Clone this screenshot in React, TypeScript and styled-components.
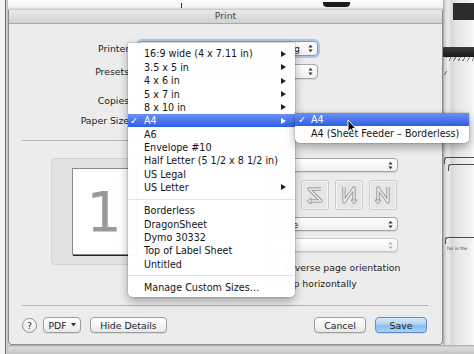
import styled, { createGlobalStyle } from 'styled-components';

type MenuEntry = { label: string; sub?: boolean; checked?: boolean; active?: boolean };

const sizeGroups: MenuEntry[][] = [
  [
    { label: '16:9 wide (4 x 7.11 in)', sub: true },
    { label: '3.5 x 5 in', sub: true },
    { label: '4 x 6 in', sub: true },
    { label: '5 x 7 in', sub: true },
    { label: '8 x 10 in', sub: true },
    { label: 'A4', sub: true, checked: true, active: true },
    { label: 'A6' },
    { label: 'Envelope #10' },
    { label: 'Half Letter (5 1/2 x 8 1/2 in)' },
    { label: 'US Legal' },
    { label: 'US Letter', sub: true },
  ],
  [
    { label: 'Borderless' },
    { label: 'DragonSheet' },
    { label: 'Dymo 30332' },
    { label: 'Top of Label Sheet' },
    { label: 'Untitled' },
  ],
  [{ label: 'Manage Custom Sizes…' }],
];

const a4Entries: MenuEntry[] = [
  { label: 'A4', checked: true, active: true },
  { label: 'A4 (Sheet Feeder – Borderless)' },
];

const GlobalStyle = createGlobalStyle`
  html, body {
    margin: 0;
    padding: 0;
  }
  body {
    width: 474px;
    height: 354px;
    overflow: hidden;
    background: #f0f0f0;
    font-family: "DejaVu Sans", "Lucida Grande", sans-serif;
    font-size: 9.3px;
    color: #1c1c1c;
  }
`;

const Desktop = styled.div`
  position: relative;
  width: 474px;
  height: 354px;
  display: flex;
  overflow: hidden;
`;

const LeftStrip = styled.div`
  width: 8px;
  flex-shrink: 0;
  background: linear-gradient(to right, #f4f4f4 0, #f4f4f4 5px, #6e6e6e 5px, #6e6e6e 6px, #d2d2d2 6px, #bdbdbd 8px);
`;

const CenterColumn = styled.div`
  width: 435px;
  flex-shrink: 0;
  display: flex;
  flex-direction: column;
`;

const TopStrip = styled.div`
  height: 10px;
  display: flex;
  align-items: flex-start;
  background: linear-gradient(#fbfbfb, #f3f3f3 70%, #c4c4c4);
`;

const Tick = styled.div`
  width: 1px;
  height: 5px;
  margin: 3px 0 0 173px;
  background: #333;
`;

const Pill = styled.div`
  width: 27px;
  height: 5px;
  margin: 2px 0 0 141px;
  border-radius: 0 0 4px 4px;
  background: #1a1a1a;
`;

const Dialog = styled.div`
  height: 335px;
  box-sizing: border-box;
  display: flex;
  flex-direction: column;
  background: #ececec;
  border: 1px solid #8c8c8c;
  border-top: none;
  border-radius: 0 0 4px 4px;
`;

const TitleBar = styled.div`
  height: 13px;
  line-height: 12px;
  text-align: center;
  font-size: 9.3px;
  color: #454545;
  background: linear-gradient(#e9e9e9, #d2d2d2);
  border-bottom: 1px solid #a8a8a8;
`;

const FormSection = styled.div`
  margin-top: 17px;
  display: flex;
  flex-direction: column;
`;

const FormRow = styled.div<{ $top: number }>`
  margin-top: ${p => p.$top}px;
  height: 15px;
  display: grid;
  grid-template-columns: 120px 180px;
  column-gap: 9px;
  align-items: center;
`;

const Label = styled.span`
  text-align: right;
  white-space: nowrap;
  color: #1c1c1c;
`;

const Popup = styled.div<{ $focus?: boolean; $disabled?: boolean }>`
  height: 15px;
  box-sizing: border-box;
  display: flex;
  align-items: center;
  padding: 0 4px 0 6px;
  border: 1px solid ${p => (p.$focus ? '#6d9ad6' : p.$disabled ? '#c6c6c6' : '#a4a4a4')};
  border-radius: 4px;
  background: linear-gradient(#ffffff, #f1f1f1);
  color: ${p => (p.$disabled ? '#a8a8a8' : '#1c1c1c')};
  box-shadow: ${p => (p.$focus ? '0 0 0 2px rgba(120, 165, 230, 0.55)' : '0 1px 1px rgba(0, 0, 0, 0.1)')};
  overflow: hidden;
`;

const PopupText = styled.span<{ $end?: boolean }>`
  flex: 1;
  white-space: nowrap;
  overflow: hidden;
  text-align: ${p => (p.$end ? 'right' : 'left')};
  margin-right: ${p => (p.$end ? 8 : 0)}px;
`;

const ArrowsIcon = styled.svg`
  flex-shrink: 0;
  margin-left: auto;
`;

const TextField = styled.div`
  width: 28px;
  height: 15px;
  box-sizing: border-box;
  background: #fff;
  border: 1px solid #a4a4a4;
`;

const Divider = styled.div<{ $top: number }>`
  margin: ${p => p.$top}px 14px 0 13px;
  height: 1px;
  background: #b4b4b4;
`;

const Details = styled.div`
  margin-top: 17px;
  display: flex;
  align-items: flex-start;
`;

const Preview = styled.div`
  margin-left: 42px;
  width: 106px;
  height: 107px;
  box-sizing: border-box;
  display: flex;
  align-items: center;
  justify-content: center;
  background: #e2e2e2;
  border: 1px solid #d2d2d2;
  border-radius: 4px;
`;

const Page = styled.div`
  width: 64px;
  height: 87px;
  box-sizing: border-box;
  display: flex;
  align-items: center;
  justify-content: center;
  background: #fff;
  border: 1px solid #8a8a8a;
  box-shadow: 1px 1px 0 #222;
  font-size: 56px;
  line-height: 1;
  color: #9a9a9a;
`;

const Options = styled.div`
  margin-left: 110px;
  width: 131px;
  display: flex;
  flex-direction: column;
`;

const OptionRow = styled.div<{ $top: number; $height: number }>`
  margin-top: ${p => p.$top}px;
  height: ${p => p.$height}px;
  display: flex;
  align-items: center;

  & > ${Popup} {
    flex: 1;
    height: ${p => p.$height}px;
  }
`;

const DirectionGroup = styled.div`
  display: flex;
  gap: 6px;
`;

const DirectionBox = styled.div`
  width: 28px;
  height: 30px;
  box-sizing: border-box;
  display: flex;
  align-items: center;
  justify-content: center;
  background: #e6e6e6;
  border: 1px solid #cbcbcb;
  border-radius: 2px;
  box-shadow: inset 0 0 0 1px #f4f4f4;
`;

const CheckOption = styled.label`
  display: flex;
  align-items: center;
  gap: 5px;
  padding-left: 1px;
  white-space: nowrap;
`;

const CheckBox = styled.span`
  width: 10px;
  height: 10px;
  box-sizing: border-box;
  background: linear-gradient(#fff, #f0f0f0);
  border: 1px solid #9c9c9c;
  border-radius: 2px;
`;

const ButtonBar = styled.div`
  margin: 11px 15px 0 13px;
  height: 16px;
  display: flex;
  align-items: center;
`;

const HelpButton = styled.div`
  width: 15px;
  height: 15px;
  box-sizing: border-box;
  border-radius: 50%;
  border: 1px solid #8e8e8e;
  background: linear-gradient(#ffffff, #e9e9e9);
  display: flex;
  align-items: center;
  justify-content: center;
  font-size: 9.5px;
  color: #333;
  margin-right: 6px;
`;

const Button = styled.div<{ $width: number; $primary?: boolean; $gap?: number }>`
  width: ${p => p.$width}px;
  height: 16px;
  box-sizing: border-box;
  margin-right: ${p => p.$gap ?? 0}px;
  display: flex;
  align-items: center;
  justify-content: center;
  gap: 4px;
  border-radius: 4px;
  border: 1px solid ${p => (p.$primary ? '#5b8dcc' : '#9d9d9d')};
  background: ${p =>
    p.$primary
      ? 'linear-gradient(#d6eafc, #b0d4f6 45%, #86bdf1 55%, #a9d3f7)'
      : 'linear-gradient(#ffffff, #f5f5f5 50%, #e8e8e8)'};
  box-shadow: 0 1px 0 rgba(0, 0, 0, 0.08);
  color: #1c1c1c;
  white-space: nowrap;
`;

const Spacer = styled.div`
  flex: 1;
`;

const BottomStrip = styled.div`
  flex: 1;
  background: linear-gradient(#a9a9a9, #dadada 25%, #d2d2d2 60%, #c4c4c4);
`;

const RightStrip = styled.div`
  flex: 1;
  display: flex;
  flex-direction: column;
  background: linear-gradient(to right, #a4a4a4 0, #d6d6d6 2px, #ececec 5px, #d7d7d7 9px, #e8e8e8 15px, #f0f0f0 27px, #fafafa 31px);
`;

const DarkBlock = styled.div`
  margin: 3px 0 0 10px;
  height: 17px;
  background: #2c2c2c;
`;

const DarkBar = styled.div`
  margin-top: 27px;
  height: 10px;
  background: linear-gradient(#3a3a3a, #1a1a1a);
`;

const Hatch = styled.div`
  height: 4px;
  margin-left: 3px;
  background: repeating-linear-gradient(120deg, #777 0, #777 1px, transparent 1px, transparent 4px);
`;

const Slash = styled.div`
  margin: 10px 0 0 2px;
  width: 1px;
  height: 4px;
  background: #666;
  transform: skewX(-30deg);
`;

const CornerLine = styled.div<{ $top: number; $left: number }>`
  margin: ${p => p.$top}px 0 0 ${p => p.$left}px;
  height: 6px;
  border-top: 1px solid #4a4a4a;
  border-left: 1px solid #4a4a4a;
  border-top-left-radius: 3px;
`;

const TinyText = styled.div`
  margin: 2px 0 0 4px;
  font-size: 4.5px;
  color: #444;
  white-space: nowrap;
`;

const StripBottom = styled.div`
  margin-top: auto;
  height: 9px;
  background: linear-gradient(#a9a9a9, #dadada 25%, #d2d2d2 60%, #c4c4c4);
`;

const Menu = styled.div<{ $left: number; $top: number; $width: number; $padTop: number }>`
  position: absolute;
  left: ${p => p.$left}px;
  top: ${p => p.$top}px;
  width: ${p => p.$width}px;
  box-sizing: border-box;
  padding: ${p => p.$padTop}px 0 3px;
  background: rgba(255, 255, 255, 0.98);
  border-radius: 0 0 5px 5px;
  box-shadow: 0 4px 10px rgba(0, 0, 0, 0.33), 0 0 0 0.5px rgba(0, 0, 0, 0.18);
  font-size: 9.6px;
`;

const MenuItem = styled.div<{ $active?: boolean }>`
  height: 13.35px;
  display: flex;
  align-items: center;
  padding-right: 9px;
  white-space: nowrap;
  color: ${p => (p.$active ? '#fff' : '#141414')};
  background: ${p => (p.$active ? 'linear-gradient(#6a90f3, #2f5fe5)' : 'transparent')};
`;

const CheckMark = styled.span<{ $inset: number }>`
  width: 16px;
  box-sizing: border-box;
  padding-left: ${p => p.$inset}px;
  flex-shrink: 0;
`;

const ItemLabel = styled.span`
  flex: 1;
`;

const MenuSeparator = styled.div`
  height: 10px;
  display: flex;
  align-items: center;

  &::after {
    content: '';
    flex: 1;
    height: 1px;
    background: #e2e2e2;
  }
`;

const Cursor = styled.svg`
  position: absolute;
  left: 347px;
  top: 119px;
`;

const PopupArrows = ({ disabled }: { disabled?: boolean }) => (
  <ArrowsIcon width="5" height="9" viewBox="0 0 5 9">
    <polygon points="0.5,3.5 2.5,0.7 4.5,3.5" fill={disabled ? '#b0b0b0' : '#333'} />
    <polygon points="0.5,5.5 2.5,8.3 4.5,5.5" fill={disabled ? '#b0b0b0' : '#333'} />
  </ArrowsIcon>
);

const SubArrow = ({ color }: { color: string }) => (
  <svg width="5" height="6" viewBox="0 0 5 6">
    <polygon points="0,0 5,3 0,6" fill={color} />
  </svg>
);

const directionPaths = [
  { line: 'M7 8 H19 L7 20 H18', head: '17,17 21,20 17,23' },
  { line: 'M19 8 H7 L19 20 H8', head: '9,17 5,20 9,23' },
  { line: 'M8 6 V21 L18 7 V20', head: '15,19 18,23 21,19' },
  { line: 'M18 6 V21 L8 7 V20', head: '5,19 8,23 11,19' },
];

const DirectionIcon = ({ line, head }: { line: string; head: string }) => (
  <svg width="26" height="28" viewBox="0 0 26 28">
    <path d={line} fill="none" stroke="#9a9a9a" strokeWidth="3.4" strokeLinejoin="round" />
    <path d={line} fill="none" stroke="#efefef" strokeWidth="1.4" strokeLinejoin="round" />
    <polygon points={head} fill="#efefef" stroke="#9a9a9a" strokeWidth="1" />
  </svg>
);

const MenuRows = ({ entries, inset }: { entries: MenuEntry[]; inset: number }) => (
  <>
    {entries.map(entry => (
      <MenuItem key={entry.label} $active={entry.active}>
        <CheckMark $inset={inset}>{entry.checked ? '✓' : ''}</CheckMark>
        <ItemLabel>{entry.label}</ItemLabel>
        {entry.sub && <SubArrow color={entry.active ? '#fff' : '#222'} />}
      </MenuItem>
    ))}
  </>
);

export default function App() {
  return (
    <>
      <GlobalStyle />
      <Desktop>
        <LeftStrip />
        <CenterColumn>
          <TopStrip>
            <Tick />
            <Pill />
          </TopStrip>
          <Dialog>
            <TitleBar>Print</TitleBar>
            <FormSection>
              <FormRow $top={0}>
                <Label>Printer</Label>
                <Popup $focus>
                  <PopupText $end>g</PopupText>
                  <PopupArrows />
                </Popup>
              </FormRow>
              <FormRow $top={8}>
                <Label>Presets</Label>
                <Popup>
                  <PopupText />
                  <PopupArrows />
                </Popup>
              </FormRow>
              <FormRow $top={14}>
                <Label>Copies</Label>
                <TextField />
              </FormRow>
              <FormRow $top={5}>
                <Label>Paper Size</Label>
                <Popup>
                  <PopupText />
                  <PopupArrows />
                </Popup>
              </FormRow>
            </FormSection>

            <Divider $top={12} />

            <Details>
              <Preview>
                <Page>1</Page>
              </Preview>
              <Options>
                <OptionRow $top={0} $height={14}>
                  <Popup>
                    <PopupText />
                    <PopupArrows />
                  </Popup>
                </OptionRow>
                <OptionRow $top={8} $height={30}>
                  <DirectionGroup>
                    {directionPaths.map(d => (
                      <DirectionBox key={d.line}>
                        <DirectionIcon line={d.line} head={d.head} />
                      </DirectionBox>
                    ))}
                  </DirectionGroup>
                </OptionRow>
                <OptionRow $top={7} $height={14}>
                  <Popup>
                    <PopupText>None</PopupText>
                    <PopupArrows />
                  </Popup>
                </OptionRow>
                <OptionRow $top={7} $height={14}>
                  <Popup $disabled>
                    <PopupText />
                    <PopupArrows disabled />
                  </Popup>
                </OptionRow>
                <OptionRow $top={9} $height={12}>
                  <CheckOption>
                    <CheckBox />
                    Reverse page orientation
                  </CheckOption>
                </OptionRow>
                <OptionRow $top={4} $height={12}>
                  <CheckOption>
                    <CheckBox />
                    Flip horizontally
                  </CheckOption>
                </OptionRow>
              </Options>
            </Details>

            <Divider $top={16} />

            <ButtonBar>
              <HelpButton>?</HelpButton>
              <Button $width={38} $gap={9}>
                PDF
                <svg width="5" height="4" viewBox="0 0 5 4">
                  <polygon points="0,0 5,0 2.5,3.5" fill="#333" />
                </svg>
              </Button>
              <Button $width={77}>Hide Details</Button>
              <Spacer />
              <Button $width={52} $gap={9}>Cancel</Button>
              <Button $width={52} $primary>Save</Button>
            </ButtonBar>
          </Dialog>
          <BottomStrip />
        </CenterColumn>
        <RightStrip>
          <DarkBlock />
          <DarkBar />
          <Hatch />
          <Slash />
          <CornerLine $top={82} $left={1} />
          <CornerLine $top={0} $left={5} />
          <CornerLine $top={66} $left={2} />
          <TinyText>his is the</TinyText>
          <StripBottom />
        </RightStrip>

        <Menu $left={128} $top={43} $width={167} $padTop={4.3}>
          {sizeGroups.map((group, i) => (
            <div key={i}>
              {i > 0 && <MenuSeparator />}
              <MenuRows entries={group} inset={2} />
            </div>
          ))}
        </Menu>

        <Menu $left={295} $top={113} $width={174} $padTop={0}>
          <MenuRows entries={a4Entries} inset={3} />
        </Menu>

        <Cursor width="10" height="15" viewBox="0 0 10 15">
          <path d="M1 1 V12.5 L3.7 10 L5.5 14 L7.1 13.3 L5.4 9.4 H8.8 Z" fill="#000" stroke="#fff" strokeWidth="1" strokeLinejoin="round" />
        </Cursor>
      </Desktop>
    </>
  );
}
